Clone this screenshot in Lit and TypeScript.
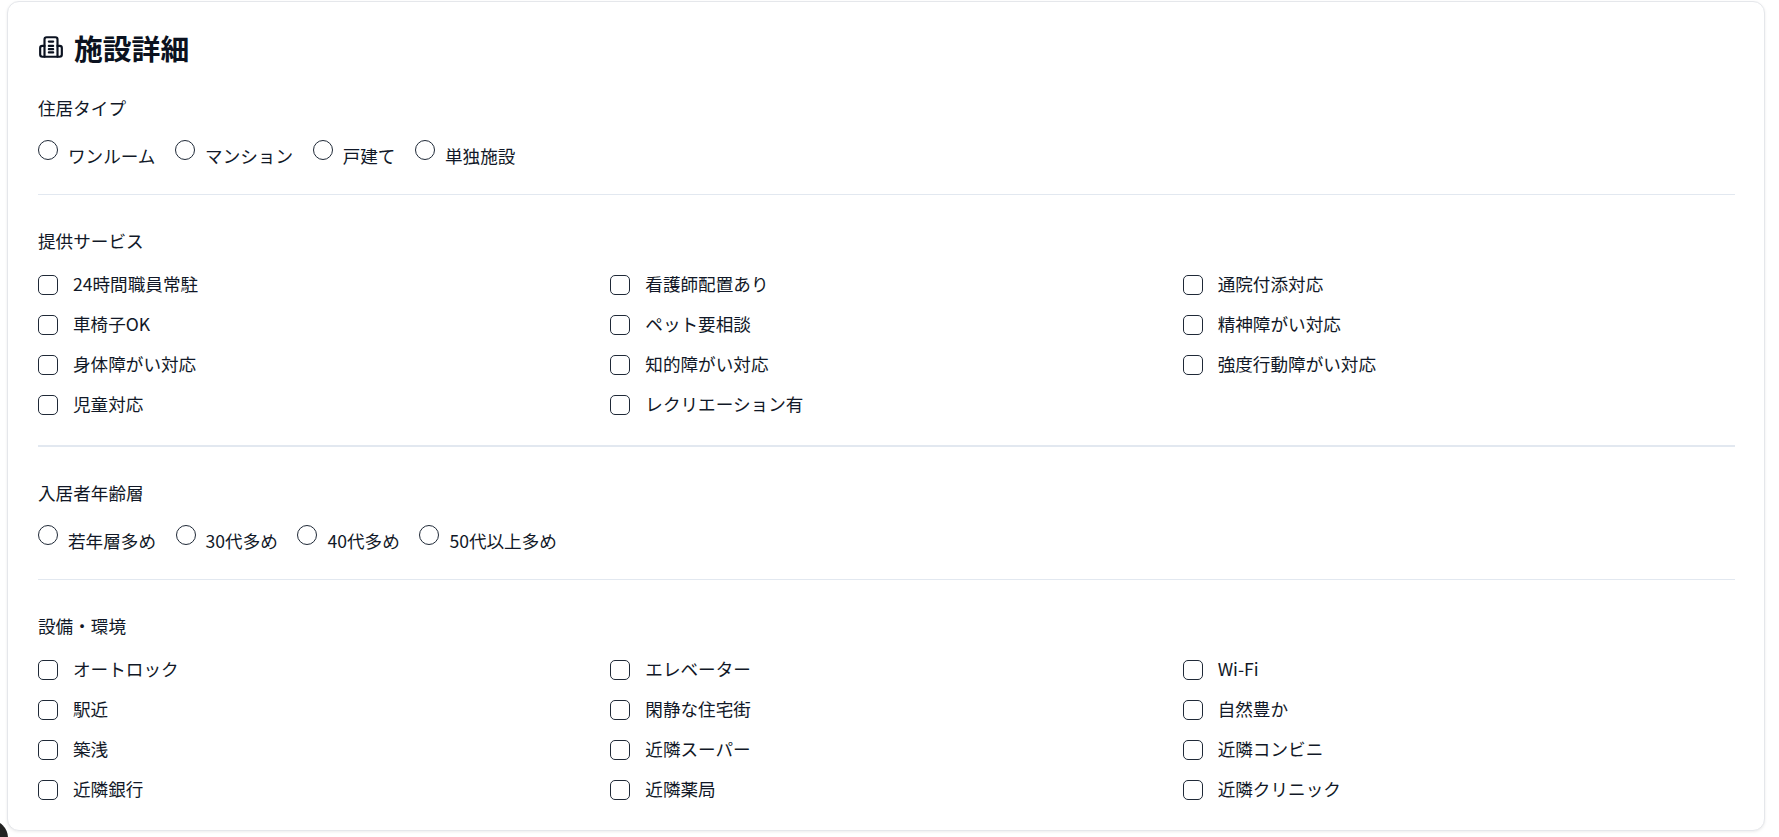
import { LitElement, html, css } from "lit";
import { customElement } from "lit/decorators.js";

const housing = ["ワンルーム", "マンション", "戸建て", "単独施設"];
const services = ["24時間職員常駐", "看護師配置あり", "通院付添対応", "車椅子OK", "ペット要相談", "精神障がい対応", "身体障がい対応", "知的障がい対応", "強度行動障がい対応", "児童対応", "レクリエーション有"];
const ages = ["若年層多め", "30代多め", "40代多め", "50代以上多め"];
const equipment = ["オートロック", "エレベーター", "Wi-Fi", "駅近", "閑静な住宅街", "自然豊か", "築浅", "近隣スーパー", "近隣コンビニ", "近隣銀行", "近隣薬局", "近隣クリニック"];

@customElement("app-root")
export class AppRoot extends LitElement {
  static styles = css`
    :host {
      display: block;
      height: 837px;
      overflow: hidden;
      position: relative;
      background: #fff;
      font-family: "Noto Sans CJK JP", "Noto Sans", sans-serif;
      color: #111827;
      font-size: 17.6px;
    }
    .card {
      margin: 1px 14px 0 7px;
      height: 830px;
      box-sizing: border-box;
      border: 1px solid #e5e7eb;
      border-radius: 12px;
      box-shadow: 0 1px 3px rgba(0, 0, 0, 0.08);
      padding: 24px 29px 24px 30px;
      background: #fff;
    }
    h2 {
      margin: 0 0 25.4px;
      display: flex;
      align-items: center;
      gap: 10px;
      font-size: 28.8px;
      line-height: 44px;
      height: 44px;
      font-weight: 700;
      color: #0b1220;
    }
    h2 svg { display: block; width: 26px; height: 26px; margin-top: -3px; }
    .label { line-height: 26.4px; margin-bottom: 18px; }
    .radio-label { margin-bottom: 19.4px; }
    .check-label { margin-bottom: 17.4px; }
    .check-label.bottom { margin-bottom: 17.6px; }
    .radios { display: flex; gap: 19.6px; height: 30px; }
    .radio { display: flex; align-items: flex-start; }
    .radio i {
      display: block;
      width: 20px;
      height: 20px;
      box-sizing: border-box;
      border: 1px solid #1f2937;
      border-radius: 50%;
      margin-right: 10px;
    }
    .radio span { margin-top: 3px; line-height: 26.4px; }
    .thin { border: 0; border-top: 1px solid #e2e8f0; margin: 24px 0 33.6px; }
    .thin.last { margin-bottom: 32.6px; }
    .thick { border: 0; border-top: 2px solid #e2e8f0; margin: 26.4px 0 32.6px; }
    .grid { display: grid; grid-template-columns: repeat(3, 1fr); column-gap: 20px; row-gap: 13.6px; }
    .check { display: flex; align-items: center; gap: 15px; height: 26.4px; }
    .check i {
      display: block;
      width: 20px;
      height: 20px;
      box-sizing: border-box;
      border: 1.4px solid #1f2937;
      border-radius: 5px;
    }
    .check span { margin-bottom: 3px; }
    .blob {
      position: absolute;
      left: -28px;
      top: 820px;
      width: 36px;
      height: 36px;
      border-radius: 50%;
      background: #222;
    }
  `;

  private radios(items: string[]) {
    return html`<div class="radios">${items.map((t) => html`<div class="radio"><i></i><span>${t}</span></div>`)}</div>`;
  }
  private checks(items: string[]) {
    return html`<div class="grid">${items.map((t) => html`<div class="check"><i></i><span>${t}</span></div>`)}</div>`;
  }

  render() {
    return html`
      <div class="card">
        <h2>
          <svg viewBox="0 0 24 24" fill="none" stroke="currentColor" stroke-width="2" stroke-linecap="round" stroke-linejoin="round">
            <path d="M6 21V5a2 2 0 0 1 2-2h8a2 2 0 0 1 2 2v16" />
            <path d="M6 11H4a2 2 0 0 0-2 2v6a2 2 0 0 0 2 2h16a2 2 0 0 0 2-2v-6a2 2 0 0 0-2-2h-2" />
            <path d="M10 7h4M10 11h4M10 14h4M10 17h4" />
          </svg>
          施設詳細
        </h2>
        <div class="label">住居タイプ</div>
        ${this.radios(housing)}
        <hr class="thin" />
        <div class="label check-label">提供サービス</div>
        ${this.checks(services)}
        <hr class="thick" />
        <div class="label radio-label">入居者年齢層</div>
        ${this.radios(ages)}
        <hr class="thin last" />
        <div class="label check-label bottom">設備・環境</div>
        ${this.checks(equipment)}
      </div>
      <div class="blob"></div>
    `;
  }
}
